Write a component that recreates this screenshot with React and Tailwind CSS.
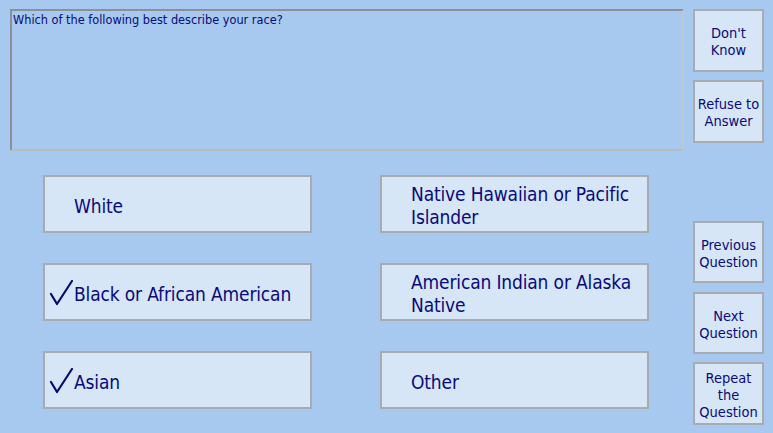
const font = { fontFamily: '"DejaVu Sans Condensed", "DejaVu Sans", sans-serif' };

function Check() {
  return (
    <svg width="24" height="26" viewBox="0 0 24 26" className="shrink-0" fill="none">
      <path d="M2 14 L8 24 L23 1" stroke="#0a0a6e" strokeWidth="2.2" strokeLinecap="round" strokeLinejoin="round" />
    </svg>
  );
}

function Option({ label, checked }) {
  return (
    <button className="h-[58px] w-[269px] flex items-center pt-[4px] bg-[#d6e6f7] border-2 border-[#a8acb0] text-left text-[19px] leading-[23px] tracking-[-0.15px] text-[#0a0a78]">
      <span className="w-[29px] flex justify-end pr-[1px] -mt-[2px]">{checked && <Check />}</span>
      <span>{label}</span>
    </button>
  );
}

function SideButton({ children, className = '' }) {
  return (
    <button className={`w-[71px] flex items-center justify-center pt-[3px] text-center bg-[#d6e6f7] border-2 border-[#a8acb0] text-[14.5px] leading-[17px] text-[#0a0a78] ${className}`}>
      {children}
    </button>
  );
}

export default function App() {
  return (
    <div className="w-[773px] h-[433px] bg-[#a7c9ef] flex pl-[10px] pt-[9px] overflow-hidden" style={font}>
      <div className="w-[674px] flex flex-col">
        <div className="h-[142px] border-2 border-t-[#8c8f93] border-l-[#8c8f93] border-r-[#c2c7cc] border-b-[#b8bcc0] px-[1px] pt-[1px] text-[12.6px] leading-[15px] text-[#0a0a78]">
          Which of the following best describe your race?
        </div>
        <div className="mt-[24px] ml-[33px] grid grid-cols-[269px_269px] gap-x-[68px] gap-y-[30px]">
          <Option label="White" />
          <Option label={<>Native Hawaiian or Pacific<br />Islander</>} />
          <Option label="Black or African American" checked />
          <Option label={<>American Indian or Alaska<br />Native</>} />
          <Option label="Asian" checked />
          <Option label="Other" />
        </div>
      </div>
      <div className="ml-[9px] flex flex-col">
        <SideButton className="h-[63px]">Don't<br />Know</SideButton>
        <SideButton className="h-[63px] mt-[8px]">Refuse to<br />Answer</SideButton>
        <SideButton className="h-[62px] mt-[78px]">Previous<br />Question</SideButton>
        <SideButton className="h-[62px] mt-[9px]">Next<br />Question</SideButton>
        <SideButton className="h-[63px] mt-[8px]">Repeat<br />the<br />Question</SideButton>
      </div>
    </div>
  );
}
